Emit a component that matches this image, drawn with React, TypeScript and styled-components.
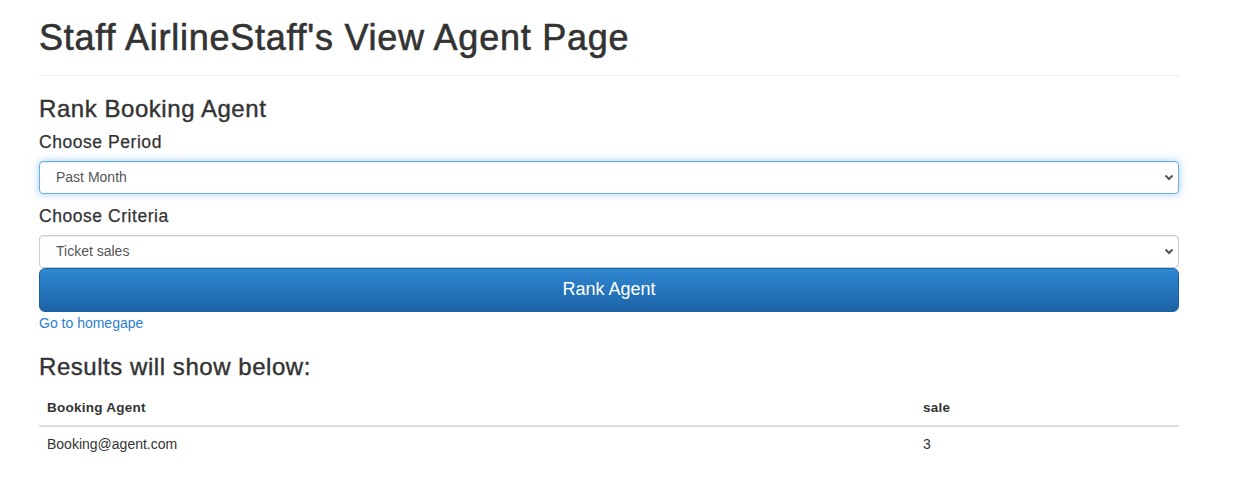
import React, { useState } from "react";
import styled, { createGlobalStyle } from "styled-components";

const GlobalStyle = createGlobalStyle`
  html, body {
    margin: 0;
    padding: 0;
    background: #fff;
  }
  body {
    font-family: "Liberation Sans", Arial, sans-serif;
    font-size: 14px;
    line-height: 1.42857;
    color: #333;
  }
`;

const Container = styled.div`
  width: 1140px;
  margin-left: 39px;
`;

const PageHeader = styled.div`
  border-bottom: 1px solid #eee;
  padding-bottom: 17px;
`;

const Title = styled.h1`
  margin: 18px 0 0;
  font-size: 36px;
  font-weight: 400;
  line-height: 1.1;
  letter-spacing: 0.75px;
  -webkit-text-stroke: 0.6px #333;
`;

const SectionTitle = styled.h3<{ $top?: number }>`
  margin: ${(p) => p.$top ?? 20}px 0 10px;
  font-size: 24px;
  font-weight: 400;
  line-height: 26px;
  letter-spacing: 0.55px;
  -webkit-text-stroke: 0.4px #333;
`;

const Label = styled.label<{ $top?: number }>`
  display: block;
  margin: ${(p) => p.$top ?? 10}px 0 9px;
  font-size: 17.5px;
  line-height: 20px;
  letter-spacing: 0.55px;
  -webkit-text-stroke: 0.25px #333;
`;

const SelectWrap = styled.div`
  position: relative;
`;

const Select = styled.select<{ $focused?: boolean }>`
  display: block;
  width: 100%;
  height: 33px;
  box-sizing: border-box;
  padding: 0 30px 0 16px;
  font-family: "Liberation Sans", Arial, sans-serif;
  font-size: 14px;
  color: #555;
  background: #fff;
  border: 1px solid ${(p) => (p.$focused ? "#66afe9" : "#ccc")};
  border-radius: 4px;
  appearance: none;
  -webkit-appearance: none;
  outline: none;
  box-shadow: ${(p) =>
    p.$focused
      ? "inset 0 1px 1px rgba(0,0,0,.075), 0 0 8px rgba(102,175,233,.6)"
      : "inset 0 1px 1px rgba(0,0,0,.075)"};
`;

const Chevron = styled.svg`
  position: absolute;
  right: 5px;
  top: 50%;
  width: 10px;
  height: 10px;
  margin-top: -5px;
  pointer-events: none;
`;

const PrimaryButton = styled.button`
  display: block;
  width: 100%;
  height: 44px;
  margin: 0;
  font-family: "Liberation Sans", Arial, sans-serif;
  font-size: 18px;
  color: #fff;
  border: 1px solid #1d62a0;
  border-radius: 6px;
  background-image: linear-gradient(to bottom, #2f88d2 0%, #1c64a6 100%);
  cursor: pointer;
`;

const HomeLink = styled.a`
  display: block;
  width: max-content;
  color: #2a7fd1;
  font-size: 14px;
  line-height: 22px;
  text-decoration: none;
`;

const Table = styled.table`
  width: 100%;
  border-collapse: collapse;
  font-size: 13.5px;
`;

const HeadCell = styled.th<{ $width?: number }>`
  width: ${(p) => (p.$width ? `${p.$width}px` : "auto")};
  padding: 8px;
  text-align: left;
  font-weight: 700;
  line-height: 19px;
  letter-spacing: 0.25px;
  border-bottom: 2px solid #ddd;
`;

const Cell = styled.td`
  padding: 8px;
  line-height: 19px;
  font-size: 14px;
`;

const SelectField = ({
  options,
  focused,
}: {
  options: string[];
  focused?: boolean;
}) => (
  <SelectWrap>
    <Select $focused={focused} defaultValue={options[0]}>
      {options.map((o) => (
        <option key={o}>{o}</option>
      ))}
    </Select>
    <Chevron viewBox="0 0 10 10">
      <polyline
        points="1.5,3.5 5,7 8.5,3.5"
        fill="none"
        stroke="#555"
        strokeWidth="2"
      />
    </Chevron>
  </SelectWrap>
);

const results = [{ agent: "Booking@agent.com", sale: 3 }];

const App = () => {
  const [rows] = useState(results);

  return (
    <>
      <GlobalStyle />
      <Container>
        <PageHeader>
          <Title>Staff AirlineStaff's View Agent Page</Title>
        </PageHeader>
        <SectionTitle>Rank Booking Agent</SectionTitle>
        <Label>Choose Period</Label>
        <SelectField focused options={["Past Month", "Past Year"]} />
        <Label $top={12}>Choose Criteria</Label>
        <SelectField options={["Ticket sales", "Commission"]} />
        <PrimaryButton>Rank Agent</PrimaryButton>
        <HomeLink href="#">Go to homegape</HomeLink>
        <SectionTitle $top={20}>Results will show below:</SectionTitle>
        <Table>
          <thead>
            <tr>
              <HeadCell $width={860}>Booking Agent</HeadCell>
              <HeadCell>sale</HeadCell>
            </tr>
          </thead>
          <tbody>
            {rows.map((r) => (
              <tr key={r.agent}>
                <Cell>{r.agent}</Cell>
                <Cell>{r.sale}</Cell>
              </tr>
            ))}
          </tbody>
        </Table>
      </Container>
    </>
  );
};

export default App;
